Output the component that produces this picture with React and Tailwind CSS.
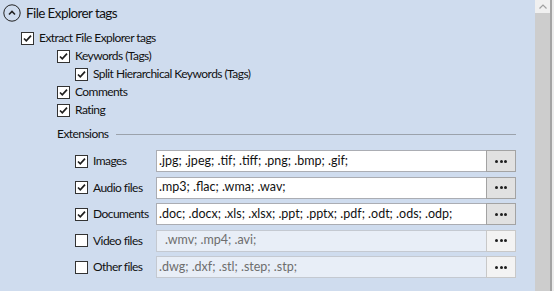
import React from "react";

function Check({ checked }) {
  return (
    <span className="w-[13px] h-[13px] border border-[#333333] bg-white flex items-center justify-center shrink-0">
      {checked && (
        <svg width="11" height="11" viewBox="0 0 11 11">
          <path d="M2 5.5 L4.3 7.8 L9 2.6" stroke="#1e1e1e" strokeWidth="1.7" fill="none" />
        </svg>
      )}
    </span>
  );
}

function Row({ indent, checked, label }) {
  return (
    <div className={`flex items-center h-[18px] gap-[5px] ${indent}`}>
      <Check checked={checked} />
      <span>{label}</span>
    </div>
  );
}

function Dots() {
  return (
    <span className="flex gap-[1.5px]">
      <span className="w-[3px] h-[3px] rounded-full bg-[#1e1e1e]" />
      <span className="w-[3px] h-[3px] rounded-full bg-[#1e1e1e]" />
      <span className="w-[3px] h-[3px] rounded-full bg-[#1e1e1e]" />
    </span>
  );
}

const extensions = [
  { label: "Images", value: ".jpg; .jpeg; .tif; .tiff; .png; .bmp; .gif;", on: true },
  { label: "Audio files", value: ".mp3; .flac; .wma; .wav;", on: true },
  { label: "Documents", value: ".doc; .docx; .xls; .xlsx; .ppt; .pptx; .pdf; .odt; .ods; .odp;", on: true },
  { label: "Video files", value: ".wmv; .mp4; .avi;", on: false, pad: true },
  { label: "Other files", value: ".dwg; .dxf; .stl; .step; .stp;", on: false },
];

export default function App() {
  return (
    <div className="w-[554px] h-[291px] bg-[#cfdcee] flex overflow-hidden font-['Lato',sans-serif] text-[12px] tracking-[-0.55px] text-[#111111]">
      <div className="flex-1 flex flex-col pr-[19px]">
        <div className="flex items-center h-[26px] pl-[3px] gap-[5px]">
          <svg width="18" height="18" viewBox="0 0 18 18">
            <circle cx="9" cy="9" r="8.2" stroke="#222" strokeWidth="1" fill="none" />
            <path d="M6 10.5 L9 7.5 L12 10.5" stroke="#222" strokeWidth="1.6" fill="none" />
          </svg>
          <span className="text-[13.5px] tracking-[-0.6px]">File Explorer tags</span>
        </div>

        <div className="mt-[3px] flex flex-col">
          <Row indent="pl-[21px]" checked label="Extract File Explorer tags" />
          <Row indent="pl-[57px]" checked label="Keywords (Tags)" />
          <Row indent="pl-[75px]" checked label="Split Hierarchical Keywords (Tags)" />
          <Row indent="pl-[57px]" checked label="Comments" />
          <Row indent="pl-[57px]" checked label="Rating" />
        </div>

        <div className="mt-[6px] h-[18px] flex items-center pl-[57px] gap-[8px]">
          <span>Extensions</span>
          <div className="flex-1 h-px bg-[#9ba2ab]" />
        </div>

        <div className="mt-[7px] flex flex-col gap-[4.5px] pl-[75px]">
          {extensions.map((e) => (
            <div key={e.label} className="flex items-center h-[22px]">
              <Check checked={e.on} />
              <span className="ml-[5px] w-[63px]">{e.label}</span>
              <div
                className={`flex-1 h-full flex items-center border text-[12.5px] tracking-normal ${
                  e.on
                    ? "bg-white border-[#abadb3] text-[#111111]"
                    : "bg-[#e8eef7] border-[#c4c9d1] text-[#6d6d6d]"
                } ${e.pad ? "pl-[8px]" : "pl-[2px]"}`}
              >
                {e.value}
              </div>
              <div
                className={`w-[30px] h-full -ml-px flex items-center justify-center border ${
                  e.on ? "bg-[#e1e1e1] border-[#a3a3a3]" : "bg-[#f3f3f3] border-[#c8c8c8]"
                }`}
              >
                <Dots />
              </div>
            </div>
          ))}
        </div>
      </div>

      <div className="w-[15px] flex flex-col bg-[#cdcdcd]">
        <div className="h-[13px] bg-[#f0f0f0] flex items-center justify-center">
          <svg width="8" height="5" viewBox="0 0 8 5">
            <path d="M0.5 4.5 L4 1 L7.5 4.5" stroke="#a0a0a0" strokeWidth="1.2" fill="none" />
          </svg>
        </div>
      </div>
      <div className="w-[2px] bg-[#a3a3a3]" />
      <div className="w-[2px] bg-[#ececec]" />
    </div>
  );
}
